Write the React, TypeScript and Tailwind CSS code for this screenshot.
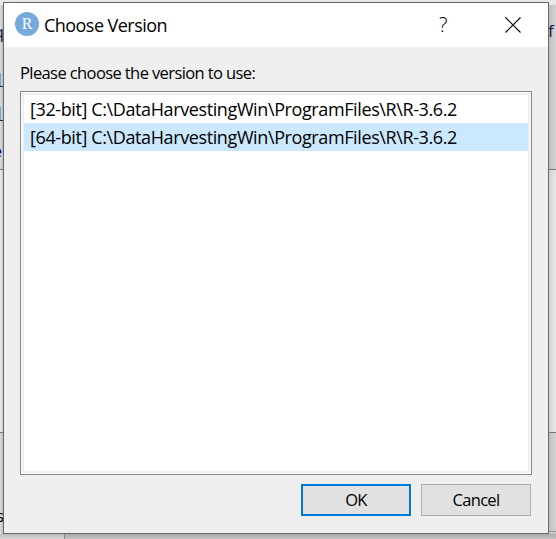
const versions = [
  "[32-bit] C:\\DataHarvestingWin\\ProgramFiles\\R\\R-3.6.2",
  "[64-bit] C:\\DataHarvestingWin\\ProgramFiles\\R\\R-3.6.2",
];

// The slivers of the main window that show round the dialog.
function Backdrop() {
  return (
    <div className="absolute inset-0 flex flex-col overflow-hidden bg-[#c9c9c9] text-[17px] leading-5 text-[#101040]">
      <div className="h-[5px] shrink-0 bg-[#e8e8e8]" />
      <div className="flex h-[165px] shrink-0 justify-between border-b border-[#77777b]">
        <div className="flex w-1 flex-col items-end overflow-hidden bg-gradient-to-r from-[#dcdcdc] to-[#b4b4b4] pt-[17px]">
          <span>q</span>
          <span className="mt-[31px] h-[14px] w-1 border-b border-[#202030] bg-linear-to-r from-[#62aedb] from-25% to-transparent to-25%" />
          <span className="mt-5 h-[14px] w-1 border-b border-[#202030] bg-linear-to-r from-[#62aedb] from-25% to-transparent to-25%" />
          <span className="mr-[2px] mt-[20px] text-[#000080]">e</span>
        </div>
        <div className="w-2 bg-gradient-to-r from-[#bcbcbc] to-[#d4d4d4] pt-4">f</div>
      </div>
      <div className="flex h-[263px] shrink-0 justify-between border-b border-[#77777b]">
        <div className="w-1 bg-gradient-to-r from-[#ededed] to-[#c4c4c4]" />
        <div className="w-2 bg-gradient-to-r from-[#cecece] to-[#e8e8e8]" />
      </div>
      <div className="flex h-[101px] shrink-0 justify-between">
        <div className="flex w-1 flex-col items-end overflow-hidden bg-gradient-to-r from-[#dcdcdc] to-[#b4b4b4] pt-[73px] text-black">
          <span>s</span>
        </div>
        <div className="mb-[2px] w-2 border-b border-[#999999] bg-gradient-to-r from-[#bcbcbc] to-[#d4d4d4]" />
      </div>
      <div className="flex h-[5px] shrink-0">
        <div className="w-16 bg-gradient-to-b from-[#bcbcbc] to-[#d6d6d6]" />
        <div className="grow border-l border-[#8c8c8c] bg-gradient-to-b from-[#aaaaaa] to-[#c4c4c4]" />
      </div>
    </div>
  );
}

function TitleBar() {
  return (
    <header className="flex h-11 shrink-0 items-start bg-white pl-[11px] pt-[9px]">
      <div className="flex size-6 items-center justify-center rounded-full bg-[#75aadb]">
        <span className="font-['Liberation_Serif',serif] text-[16px] leading-6 text-white">R</span>
      </div>
      <h1 className="ml-[5px] mt-px w-[380px] whitespace-nowrap text-[18px] leading-6 tracking-[-0.54px]">
        Choose Version
      </h1>
      <span className="ml-[15px] mt-px w-4 text-[20px] font-light leading-6">?</span>
      <svg className="ml-[50px] mt-[5px] size-4" viewBox="0 0 16 16" fill="none" stroke="#000" strokeWidth="1.1">
        <path d="M.5.5 15.5 15.5M15.5.5.5 15.5" />
      </svg>
    </header>
  );
}

export default function App() {
  return (
    <div className="relative h-[539px] w-[556px] overflow-hidden font-['Open_Sans','Noto_Sans',sans-serif] text-black">
      <Backdrop />
      <main className="relative pl-[3px] pt-[2px]">
        <section className="flex h-[532px] w-[546px] flex-col border border-[#666866] bg-[#efefef]">
          <TitleBar />
          <div className="flex flex-col gap-[6px] px-4 pt-[14px]">
            <p className="h-6 whitespace-nowrap text-[16.5px] leading-6 tracking-[-0.6px]">
              Please choose the version to use:
            </p>
            <div className="h-[384px] border border-[#828790] bg-white p-px">
              <ul className="h-[380px] border-2 border-[#efefef] bg-white">
                {versions.map((version, i) => (
                  <li
                    key={version}
                    className={`h-7 whitespace-pre pl-[6px] text-[18px] leading-7 tracking-[-0.39px] ${i === 1 ? "bg-[#cce8ff]" : ""}`}
                  >
                    {version}
                  </li>
                ))}
              </ul>
            </div>
          </div>
          <footer className="mt-[9px] flex justify-end gap-[10px] pr-[17px] text-[16.5px] tracking-[-0.7px]">
            <button className="h-8 w-[110px] border-2 border-[#0078d7] bg-[#e1e1e1]">OK</button>
            <button className="h-8 w-[110px] border border-[#adadad] bg-[#e1e1e1]">Cancel</button>
          </footer>
        </section>
      </main>
    </div>
  );
}
